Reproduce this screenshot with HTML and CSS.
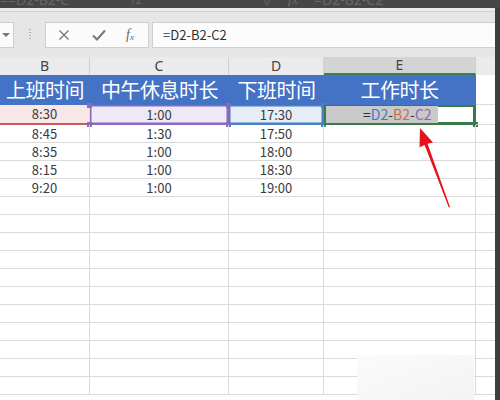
FILE: index.html
```html
<!DOCTYPE html>
<html lang="zh-CN">
<head>
<meta charset="utf-8">
<title>Sheet</title>
<link rel="stylesheet" href="styles.css">
</head>
<body>
<div class="app">
  <div class="topband">
    <span class="ghost g1">==D2-B2-C</span>
    <span class="ghost g2">12</span>
    <span class="ghost g3">✓</span>
    <span class="ghost g4">fx</span>
    <span class="ghost g5">=D2-B2-C2</span>
  </div>
  <div class="main">
    <div class="content">
      <div class="strip"></div>
      <div class="toolbar">
        <div class="namebox"><span class="caret"></span></div>
        <div class="dots"></div>
        <div class="fxbox">
          <svg class="ic" width="12" height="12" viewBox="0 0 12 12"><path d="M1.5 1.5 L10.5 10.5 M10.5 1.5 L1.5 10.5" stroke="#777" stroke-width="1.4" fill="none"/></svg>
          <svg class="ic" width="14" height="12" viewBox="0 0 14 12"><path d="M1 6.5 L5 10.5 L13 1.5" stroke="#777" stroke-width="2" fill="none"/></svg>
          <span class="fx">f<sub>x</sub></span>
        </div>
        <div class="formula">=D2-B2-C2</div>
      </div>
      <div class="gap"></div>
      <div class="colhead">
        <div class="ch">B</div>
        <div class="ch">C</div>
        <div class="ch">D</div>
        <div class="ch ch-active">E</div>
        <div class="ch ch-f"></div>
      </div>
      <div class="grid">
        <div class="hd">上班时间</div>
        <div class="hd">中午休息时长</div>
        <div class="hd">下班时间</div>
        <div class="hd hd-e">工作时长</div>
        <div class="c"></div>

        <div class="c r2 sel-b">8:30</div>
        <div class="c r2 sel-c">1:00<i class="h tl pu"></i><i class="h tr pu"></i><i class="h bl pu"></i><i class="h br pu"></i></div>
        <div class="c r2 sel-d">17:30<i class="h tr bu"></i><i class="h br bu"></i></div>
        <div class="c r2 sel-e"><span class="hl">=<span class="fd">D2</span>-<span class="fb">B2</span>-<span class="fc">C2</span></span><i class="h br gr"></i></div>
        <div class="c r2"></div>

        <div class="c">8:45</div><div class="c">1:30</div><div class="c">17:50</div><div class="c"></div><div class="c"></div>
        <div class="c">8:35</div><div class="c">1:00</div><div class="c">18:00</div><div class="c"></div><div class="c"></div>
        <div class="c">8:15</div><div class="c">1:00</div><div class="c">18:30</div><div class="c"></div><div class="c"></div>
        <div class="c">9:20</div><div class="c">1:00</div><div class="c">19:00</div><div class="c"></div><div class="c"></div>
        <div class="c"></div><div class="c"></div><div class="c"></div><div class="c"></div><div class="c"></div>
        <div class="c"></div><div class="c"></div><div class="c"></div><div class="c"></div><div class="c"></div>
        <div class="c"></div><div class="c"></div><div class="c"></div><div class="c"></div><div class="c"></div>
        <div class="c"></div><div class="c"></div><div class="c"></div><div class="c"></div><div class="c"></div>
        <div class="c"></div><div class="c"></div><div class="c"></div><div class="c"></div><div class="c"></div>
        <div class="c"></div><div class="c"></div><div class="c"></div><div class="c"></div><div class="c"></div>
        <div class="c"></div><div class="c"></div><div class="c"></div><div class="c"></div><div class="c"></div>
        <div class="c"></div><div class="c"></div><div class="c"></div><div class="c"></div><div class="c"></div>
        <div class="c"></div><div class="c"></div><div class="c"></div><div class="c"></div><div class="c"></div>
        <div class="c"></div><div class="c"></div><div class="c"></div><div class="c"></div><div class="c"></div>
        <div class="c"></div><div class="c"></div><div class="c"></div><div class="c"></div><div class="c"></div>
      </div>
    </div>
    <div class="edge"></div>
  </div>
  <div class="patch"></div>
  <svg class="arrow" width="500" height="400" viewBox="0 0 500 400">
    <polygon points="420,128 433,142.5 427.6,143.8 450,207 448.8,207.4 424.6,145 419.5,147.2" fill="#e5121c"/>
  </svg>
</div>
</body>
</html>
```
FILE: styles.css
```css
* { box-sizing: border-box; }
html, body { margin: 0; padding: 0; }
body {
  background: #fff;
  font-family: "Noto Sans CJK SC", "Noto Sans", sans-serif;
  color: #333;
}
.app {
  position: relative;
  width: 500px;
  height: 400px;
  overflow: hidden;
  display: flex;
  flex-direction: column;
}
.topband {
  height: 8px;
  flex: none;
  background: #474747;
  overflow: hidden;
  display: flex;
  font-family: "Noto Sans", sans-serif;
  font-size: 14px;
  line-height: 14px;
  color: #686868;
}
.ghost { display: block; margin-top: -7px; white-space: nowrap; }
.g1 { margin-left: 0; }
.g2 { margin-left: 60px; font-size: 11px; }
.g3 { margin-left: 122px; }
.g4 { margin-left: 14px; font-style: italic; font-family: "Liberation Serif", serif; }
.g5 { margin-left: 16px; }
.main { flex: 1; display: flex; min-height: 0; }
.content { width: 495px; flex: none; display: flex; flex-direction: column; background: #e8e8e8; }
.edge { flex: 1; background: #3e3e3e; }
.strip { height: 4px; flex: none; background: #ececec; border-bottom: 1px solid #d2d2d2; }
.toolbar {
  height: 36px;
  flex: none;
  display: flex;
  align-items: flex-end;
  background: #e6e6e6;
}
.namebox {
  width: 14px;
  height: 26px;
  background: #fbfbfb;
  border: 1px solid #cfcfcf;
  border-left: none;
  display: flex;
  align-items: center;
  justify-content: center;
}
.caret {
  width: 0; height: 0;
  border-left: 4px solid transparent;
  border-right: 4px solid transparent;
  border-top: 4px solid #777;
  margin-left: -2px;
}
.dots {
  width: 2px;
  height: 12px;
  margin: 0 14px 7px 15px;
  background: repeating-linear-gradient(#b0b0b0 0 1px, transparent 1px 3px);
}
.fxbox {
  width: 104px;
  height: 26px;
  background: #fbfbfb;
  border: 1px solid #cfcfcf;
  display: flex;
  align-items: center;
  padding-left: 12px;
  gap: 0;
}
.ic { display: block; }
.fxbox .ic:first-child { margin-right: 22px; }
.fxbox .ic:nth-child(2) { margin-right: 20px; }
.fx {
  font-family: "Liberation Serif", serif;
  font-style: italic;
  font-size: 14px;
  color: #666;
  line-height: 1;
}
.fx sub { font-size: 9px; vertical-align: -1px; }
.formula {
  flex: 1;
  height: 26px;
  margin-left: 3px;
  background: #fcfcfc;
  border: 1px solid #cfcfcf;
  border-right: none;
  padding-left: 10px;
  font-size: 13px;
  line-height: 24px;
  color: #333;
}
.gap { height: 9px; flex: none; background: #e6e6e6; }
.colhead {
  height: 18px;
  flex: none;
  display: grid;
  grid-template-columns: 90px 139px 95px 152px 19px;
  background: #ebebeb;
}
.ch {
  border-right: 1px solid #d0d0d0;
  font-family: "Noto Sans", sans-serif;
  font-size: 14px;
  line-height: 18px;
  text-align: center;
  color: #444;
}
.ch-active { background: #d4d4d4; border-bottom: 2px solid #3c8150; line-height: 16px; }
.ch-f { border-right: none; }
.grid {
  flex: 1;
  display: grid;
  grid-template-columns: 90px 139px 95px 152px 19px;
  grid-template-rows: 30px 20px;
  grid-auto-rows: 18px;
  background: #fff;
}
.hd {
  background: #4472c4;
  color: #fff;
  font-size: 20px;
  line-height: 30px;
  text-align: center;
  white-space: nowrap;
  letter-spacing: -0.5px;
}
.hd-e { border-right: 1px solid #4472c4; }
.c {
  position: relative;
  border-right: 1px solid #dadada;
  border-bottom: 1px solid #dadada;
  font-size: 13px;
  line-height: 17px;
  text-align: center;
  color: #3a3a3a;
  white-space: nowrap;
}
.grid > .c:nth-child(5n) { border-right: none; }
.r2 { line-height: 19px; }
.sel-b { background: #f9e6e7; border-bottom: 2px solid #c45b5b; line-height: 18px; }
.sel-c { background: #efe9f6; box-shadow: inset 0 0 0 1.5px #8a6abf; border-color: #8a6abf; }
.sel-d { background: #e6edf7; box-shadow: inset 0 0 0 1.5px #4a7fc1; border-color: #4a7fc1; }
.sel-e { box-shadow: inset 0 0 0 2px #3a7a48; border-color: #3a7a48; text-align: left; padding-left: 2px; padding-top: 1px; font-size: 14px; line-height: 17px; }
.hl {
  display: inline-block;
  background: #c9c9c9;
  padding-left: 37px;
  width: 112px;
  color: #333;
}
.fd { color: #4a78c4; }
.fb { color: #cf6a48; }
.fc { color: #8a68b6; }
.h { position: absolute; width: 5px; height: 5px; }
.tl { left: -3px; top: -2px; }
.tr { right: -3px; top: -2px; }
.bl { left: -3px; bottom: -3px; }
.br { right: -3px; bottom: -3px; }
.pu { background: #8a6abf; }
.bu { background: #4a7fc1; }
.gr { background: #3a7a48; }
.patch {
  position: absolute;
  left: 357px;
  top: 355px;
  width: 117px;
  height: 45px;
  background: linear-gradient(160deg, #fbfbfb, #f3f3f3);
}
.arrow { position: absolute; left: 0; top: 0; pointer-events: none; }
```
